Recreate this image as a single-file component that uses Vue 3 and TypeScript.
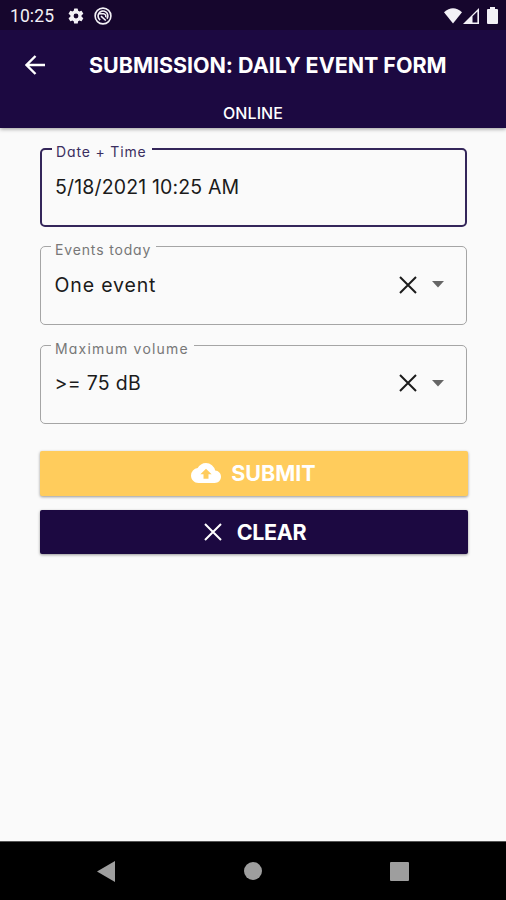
<script setup lang="ts">
import { ref } from 'vue'

interface Field {
  id: string
  label: string
  value: string
  clearable: boolean
}

const fields = ref<Field[]>([
  { id: 'date', label: 'Date + Time', value: '5/18/2021 10:25 AM', clearable: false },
  { id: 'events', label: 'Events today', value: 'One event', clearable: true },
  { id: 'volume', label: 'Maximum volume', value: '>= 75 dB', clearable: true },
])
const active = ref('date')
</script>

<template>
  <div class="screen">
    <header class="header">
      <div class="status">
        <span class="clock">10:25</span>
        <svg class="gear" viewBox="0 0 24 24"><path fill-rule="evenodd" d="M19.4 13a7.500 7.500 0 0 0 0-2l2.100-1.600a.5.5 0 0 0 .1-.6l-2-3.500a.5.5 0 0 0-.6-.2l-2.500 1a7 7 0 0 0-1.700-1l-.4-2.600a.5.5 0 0 0-.5-.5h-4a.5.5 0 0 0-.5.5L9 5.100a7 7 0 0 0-1.700 1l-2.500-1a.5.5 0 0 0-.6.200l-2 3.500a.5.5 0 0 0 .1.600L4.500 11a7.500 7.500 0 0 0 0 2l-2.200 1.600a.5.5 0 0 0-.1.600l2 3.500c.1.200.4.300.6.200l2.500-1a7 7 0 0 0 1.700 1l.4 2.600c0 .3.2.5.5.5h4c.3 0 .5-.2.5-.5l.4-2.600a7 7 0 0 0 1.700-1l2.500 1c.2.1.5 0 .6-.2l2-3.500a.5.5 0 0 0-.1-.6zM12 15.200a3.200 3.200 0 1 1 0-6.400 3.200 3.200 0 0 1 0 6.400z" /></svg>
        <svg class="radar" viewBox="0 0 18 18"><circle cx="9" cy="9" r="7.900" /><path d="M6.200 13A4.900 4.900 0 1 1 13 11.800M5.500 6.800h4a2.500 2.500 0 0 1 2.200 3.400M7 9.200l4.800 4.300" /></svg>
        <span class="spacer"></span>
        <svg class="wifi" viewBox="0 0 18 16"><path d="M0 4.200Q9-3.600 18 4.200L9 15.500z" /></svg>
        <svg class="signal" viewBox="0 0 16 16"><path fill-rule="evenodd" d="M0 16 16 0v16zM9.500 8.200V14.400h4.900V3.600z" /></svg>
        <svg class="battery" viewBox="0 0 11 17"><path d="M3 0h5v2h2q1 0 1 1v13q0 1-1 1H1q-1 0-1-1V3q0-1 1-1h2z" /></svg>
      </div>
      <div class="titlebar">
        <button class="back" aria-label="Back">
          <svg viewBox="0 0 20 20"><path d="M20 10H2M10.500 1 1.500 10l9 9" /></svg>
        </button>
        <h1>SUBMISSION: DAILY EVENT FORM</h1>
      </div>
      <div class="connection"><span>ONLINE</span></div>
    </header>

    <main class="form">
      <div
        v-for="field in fields"
        :key="field.id"
        class="field"
        :class="[field.id, { active: field.id === active }]"
      >
        <label class="label"><span>{{ field.label }}</span></label>
        <span class="value">{{ field.value }}</span>
        <template v-if="field.clearable">
          <svg class="cross" viewBox="0 0 18 18"><path d="m1 1 16 16M17 1 1 17" /></svg>
          <svg class="caret" viewBox="0 0 12 7"><path d="M0 0h12L6 6.500z" /></svg>
        </template>
      </div>

      <button class="action submit">
        <svg class="cloud" viewBox="0 0 24 16"><path fill-rule="evenodd" d="M19.350 6.040A7.490 7.490 0 0 0 12 0C9.110 0 6.600 1.640 5.350 4.040A5.994 5.994 0 0 0 0 10c0 3.310 2.690 6 6 6h13c2.760 0 5-2.240 5-5 0-2.640-2.050-4.780-4.650-4.960zM14 9v3.500h-4V9H7.500L12 4.500 16.500 9z" /></svg>
        <span>SUBMIT</span>
      </button>
      <button class="action clear">
        <svg class="cross" viewBox="0 0 18 18"><path d="m1 1 16 16M17 1 1 17" /></svg>
        <span>CLEAR</span>
      </button>
    </main>

    <nav class="navbar">
      <svg class="nav-back" viewBox="0 0 18 21"><path d="M18 0v21L0 10.500z" /></svg>
      <span class="nav-home"></span>
      <span class="nav-recent"></span>
    </nav>
  </div>
</template>

<style>
body {
  margin: 0;
}
</style>

<style scoped>
.screen {
  display: flex;
  flex-direction: column;
  width: 506px;
  height: 900px;
  overflow: hidden;
  background: #fafafa;
  font-family: Inter, 'Open Sans', sans-serif;
  font-feature-settings: 'cv11';
}
.screen * {
  box-sizing: border-box;
}
svg {
  display: block;
  flex: none;
  fill: currentColor;
}
button {
  border: 0;
  padding: 0;
  font: inherit;
  font-feature-settings: inherit;
}
.header {
  flex: none;
  height: 128px;
  color: #fff;
  background: #1c0941;
  box-shadow: 0 1px 4px rgba(0, 0, 0, 0.4);
}
.status {
  display: flex;
  align-items: center;
  height: 30px;
  padding: 1px 8px 0 10px;
  background: #16062d;
  color: #f3f1f6;
}
.clock {
  width: 57px;
  font: 400 17.500px/30px Roboto, sans-serif;
  letter-spacing: 0.1px;
}
.gear {
  width: 18px;
  height: 18px;
}
.radar {
  width: 18px;
  height: 18px;
  margin-left: 9px;
  fill: none;
  stroke: currentColor;
  stroke-width: 1.600;
}
.spacer {
  flex: 1;
}
.wifi {
  width: 18px;
  height: 16px;
  margin-right: 1px;
}
.signal {
  width: 16px;
  height: 16px;
  margin-right: 8px;
}
.battery {
  width: 11px;
  height: 17px;
}
.titlebar {
  display: flex;
  align-items: center;
  height: 69px;
  padding-left: 25px;
}
.back {
  width: 64px;
  color: #fff;
  background: none;
}
.back svg {
  width: 20px;
  height: 20px;
  fill: none;
  stroke: currentColor;
  stroke-width: 2.400;
}
h1 {
  margin: 0;
  font-size: 21.500px;
  font-weight: 700;
  line-height: 30px;
  letter-spacing: -0.04px;
  white-space: nowrap;
}
.connection {
  text-align: center;
  font-size: 16px;
  font-weight: 500;
  line-height: 28px;
  letter-spacing: 0.1px;
}
.form {
  display: flex;
  flex: 1;
  flex-direction: column;
  padding: 20px 38.500px 0 39.500px;
}
.field {
  position: relative;
  display: flex;
  align-items: center;
  height: 79px;
  margin-bottom: 19.400px;
  padding: 0 22.500px 2px 14px;
  margin-right: 0.500px;
  border: 1.500px solid #a5a5a5;
  border-radius: 5px;
}
.field.active {
  border: 2px solid #34265a;
  padding-left: 13.500px;
}
.label {
  position: absolute;
  top: -8px;
  left: 10px;
  padding: 0 5px 0 4.500px;
  background: #fafafa;
  color: #777;
  font-size: 14px;
  line-height: 22px;
  letter-spacing: 0.85px;
  white-space: nowrap;
}
.active .label {
  top: -9px;
  color: #3b2e60;
}
.volume .label {
  letter-spacing: 1.200px;
}
.value {
  flex: 1;
  color: #1b1b1b;
  font-size: 19.500px;
  line-height: 28px;
  letter-spacing: 0.15px;
  white-space: nowrap;
}
.events .value {
  letter-spacing: 0.85px;
}
.volume .value {
  letter-spacing: 0.3px;
}
.field .cross {
  width: 18px;
  height: 18px;
  color: #1b1b1b;
}
.cross {
  fill: none;
  stroke: currentColor;
  stroke-width: 2;
}
.caret {
  width: 12px;
  height: 7px;
  margin-left: 15px;
  color: #666;
}
.action {
  display: flex;
  align-items: center;
  justify-content: center;
  flex: none;
  height: 45px;
  border-radius: 2px;
  color: #fff;
  font-size: 21.500px;
  font-weight: 700;
  box-shadow: 0 1px 3px rgba(0, 0, 0, 0.4);
}
.submit {
  margin: 7.600px 0 14.600px;
  background: #ffcc5c;
}
.clear {
  height: 44px;
  padding-left: 3px;
  background: #1c0941;
  letter-spacing: -0.4px;
}
.cloud {
  width: 30px;
  height: 20px;
  margin-right: 10px;
}
.clear .cross {
  width: 18px;
  height: 18px;
  margin-right: 15px;
}
.navbar {
  display: flex;
  flex: none;
  align-items: center;
  justify-content: space-between;
  height: 59px;
  padding: 0 97px;
  border-top: 1px solid #555;
  background: #000;
  color: #9e9e9e;
}
.nav-back {
  width: 18px;
  height: 21px;
}
.nav-home {
  width: 18px;
  height: 18px;
  border-radius: 50%;
  background: #9e9e9e;
}
.nav-recent {
  width: 19px;
  height: 19px;
  border-radius: 1px;
  background: #9e9e9e;
}
</style>
